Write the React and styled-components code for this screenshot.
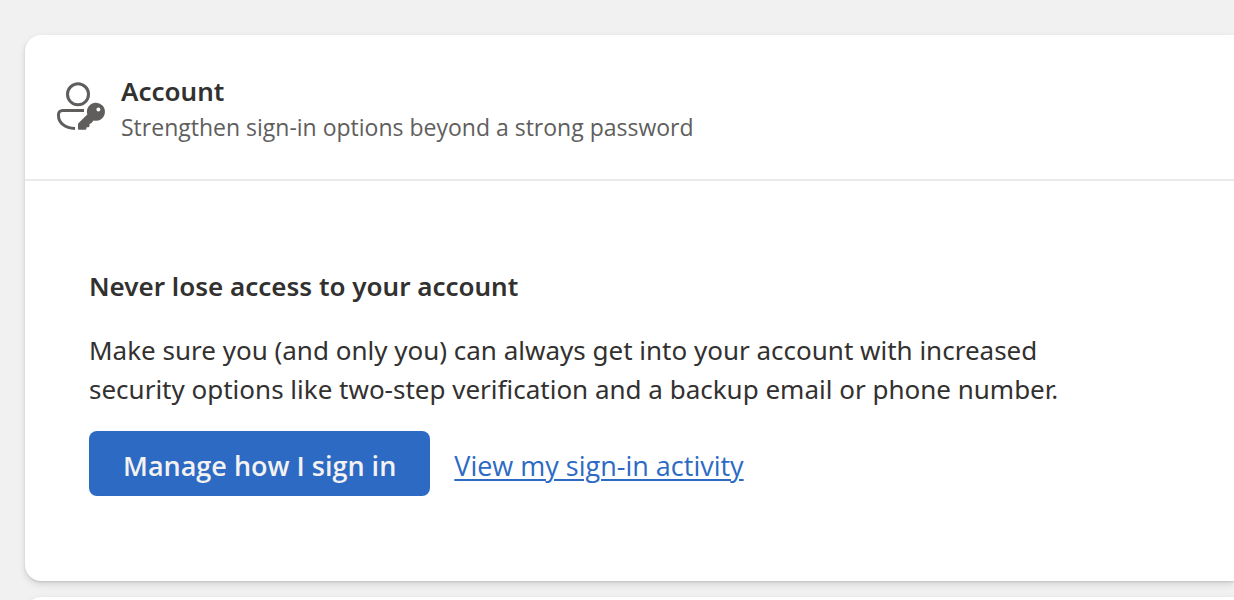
import styled, { createGlobalStyle } from "styled-components";

const App = () => {
    return (
        <>
            <GlobalStyle />
            <Page>
                <Card>
                    <CardHeader>
                        <AccountIcon />
                        <div>
                            <Title>Account</Title>
                            <Subtitle>Strengthen sign-in options beyond a strong password</Subtitle>
                        </div>
                    </CardHeader>
                    <CardBody>
                        <Heading>Never lose access to your account</Heading>
                        <Description>
                            Make sure you (and only you) can always get into your account with increased
                            security options like two-step verification and a backup email or phone number.
                        </Description>
                        <Actions>
                            <PrimaryButton type="button">Manage how I sign in</PrimaryButton>
                            <ActivityLink href="#activity">View my sign-in activity</ActivityLink>
                        </Actions>
                    </CardBody>
                </Card>
                <NextCard />
            </Page>
        </>
    );
};

const AccountIcon = () => (
    <Icon viewBox="0 1 48 48" aria-hidden="true">
        <circle cx="21" cy="12.3" r="10.5" fill="none" stroke="currentColor" strokeWidth="3" />
        <path
            d="M27 28.5H5.5a4 4 0 0 0-4 4v1.2c0 7.2 6.6 12.3 16.5 12.9"
            fill="none"
            stroke="currentColor"
            strokeWidth="3"
        />
        <path
            d="M30.3 32.4A9 9 0 1 1 36.6 38.5L34.2 41.2a1.500 1.500 0 0 1-1.100.5h-.600v2a1.500 1.500 0 0 1-1.500 1.500h-1.500v1a1.500 1.500 0 0 1-1.500 1.500H22a1 1 0 0 1-1-1V42.500a2 2 0 0 1 .6-1.400ZM41.400 29.500a2 2 0 1 0 0-4 2 2 0 0 0 0 4Z"
            fill="currentColor"
            fillRule="evenodd"
        />
    </Icon>
);

const GlobalStyle = createGlobalStyle`
    * {
        box-sizing: border-box;
    }

    body {
        margin: 0;
        background: #F1F1F1;
        color: #323130;
        font-family: "Segoe UI", "Open Sans", sans-serif;
        font-size: 27px;
    }

    h2, h3, p {
        margin: 0;
    }
`;

const Page = styled.main`
    display: flex;
    flex-direction: column;
    gap: 16px;
    height: 100vh;
    padding: 35px 0 0 25px;
    overflow: hidden;
`;

const Card = styled.section`
    flex: none;
    background: #FFF;
    border-radius: 16px 0 0 16px;
    box-shadow: 0 3px 7px rgba(0, 0, 0, 0.13), 0 1px 2px rgba(0, 0, 0, 0.11);
`;

const NextCard = styled(Card)`
    height: 64px;
`;

const CardHeader = styled.header`
    display: flex;
    align-items: center;
    gap: 16px;
    padding: 36px 32px;
    border-bottom: 2px solid #EAEAEA;
`;

const Icon = styled.svg`
    flex: none;
    width: 48px;
    height: 48px;
    color: #605E5C;
    overflow: visible;
`;

const Title = styled.h2`
    font-family: "Segoe UI", "Noto Sans", sans-serif;
    font-size: 26px;
    font-weight: 600;
    line-height: 40px;
`;

const Subtitle = styled.p`
    font-size: 23px;
    line-height: 32px;
    color: #605E5C;
`;

const CardBody = styled.div`
    padding: 85px 64px;
`;

const Heading = styled(Title).attrs({ as: "h3" })`
    margin-bottom: 25px;
`;

const Description = styled.p`
    max-width: 1024px;
    margin-bottom: 22px;
    font-family: "Segoe UI", "Noto Sans", sans-serif;
    font-size: 26px;
    line-height: 39px;
`;

const Actions = styled.div`
    display: flex;
    align-items: baseline;
    gap: 24px;
`;

const PrimaryButton = styled.button`
    padding: 14px 34px 10px;
    border: none;
    border-radius: 8px;
    background: #2C6AC4;
    color: #F3F2F1;
    font: inherit;
    font-weight: 600;
    line-height: 41px;
    cursor: pointer;

    &:hover {
        background: #245AA8;
    }
`;

const ActivityLink = styled.a`
    color: #2C6AC4;
    text-decoration: underline;
    text-decoration-thickness: 2px;
    text-underline-offset: 3px;
`;

export default App;
